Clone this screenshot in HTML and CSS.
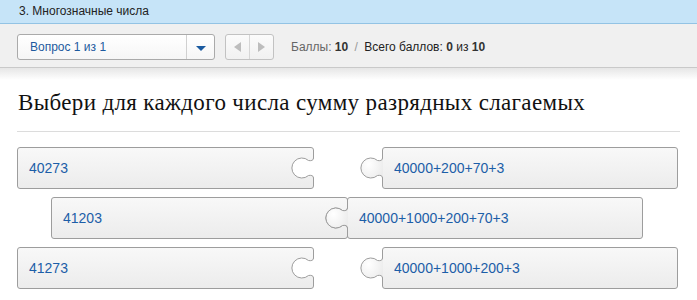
FILE: index.html
```html
<!DOCTYPE html>
<html lang="ru">
<head>
  <meta charset="UTF-8">
  <title>Многозначные числа</title>
  <link rel="stylesheet" href="styles.css">
</head>
<body>
  <div class="topbar">3. Многозначные числа</div>

  <div class="toolbar">
    <div class="select">
      <span class="select-label">Вопрос 1 из 1</span>
      <span class="select-btn"><i class="caret"></i></span>
    </div>
    <div class="nav">
      <span class="nav-btn"><i class="tri tri-left"></i></span>
      <span class="nav-btn"><i class="tri tri-right"></i></span>
    </div>
    <div class="score">
      <span class="muted">Баллы:</span> <b>10</b>
      <span class="slash">/</span>
      Всего баллов: <b>0</b> из <b>10</b>
    </div>
  </div>
  <div class="toolbar-shadow"></div>

  <div class="content">
    <h1 class="task-title">Выбери для каждого числа сумму разрядных слагаемых</h1>
    <div class="divider"></div>

    <div class="puzzle">
      <div class="pair">
        <div class="piece piece-left">
          40273
          <svg class="notch" width="24" height="26" viewBox="0 0 24 26">
            <path class="notch-fill" d="M23.5,0 V3 C23.5,5.5 21,6 18.5,5.5 A10,10 0 1 0 18.5,20.5 C21,20 23.5,20.5 23.5,23 V26 H24 V0 Z"/>
            <path class="edge" d="M23.5,0 V3 C23.5,5.5 21,6 18.5,5.5 A10,10 0 1 0 18.5,20.5 C21,20 23.5,20.5 23.5,23 V26"/>
          </svg>
        </div>
        <div class="piece piece-right">
          <svg class="knob" width="24" height="26" viewBox="0 0 24 26">
            <defs>
              <radialGradient id="shine1" cx="0.35" cy="0.35" r="0.7">
                <stop offset="0" stop-color="#ffffff"/>
                <stop offset="1" stop-color="#ececec"/>
              </radialGradient>
            </defs>
            <path fill="url(#shine1)" d="M23.5,0 V3 C23.5,5.5 21,6 18.5,5.5 A10,10 0 1 0 18.5,20.5 C21,20 23.5,20.5 23.5,23 V26 H24 V0 Z"/>
            <path class="edge" d="M23.5,0 V3 C23.5,5.5 21,6 18.5,5.5 A10,10 0 1 0 18.5,20.5 C21,20 23.5,20.5 23.5,23 V26"/>
          </svg>
          40000+200+70+3
        </div>
      </div>

      <div class="pair pair-joined">
        <div class="piece piece-left">
          41203
          <svg class="notch" width="24" height="26" viewBox="0 0 24 26">
            <path class="notch-fill" d="M23.5,0 V3 C23.5,5.5 21,6 18.5,5.5 A10,10 0 1 0 18.5,20.5 C21,20 23.5,20.5 23.5,23 V26 H24 V0 Z"/>
            <path class="edge" d="M23.5,0 V3 C23.5,5.5 21,6 18.5,5.5 A10,10 0 1 0 18.5,20.5 C21,20 23.5,20.5 23.5,23 V26"/>
          </svg>
        </div>
        <div class="piece piece-right">
          <svg class="knob" width="24" height="26" viewBox="0 0 24 26">
            <defs>
              <radialGradient id="shine2" cx="0.35" cy="0.35" r="0.7">
                <stop offset="0" stop-color="#ffffff"/>
                <stop offset="1" stop-color="#ececec"/>
              </radialGradient>
            </defs>
            <path fill="url(#shine2)" d="M23.5,0 V3 C23.5,5.5 21,6 18.5,5.5 A10,10 0 1 0 18.5,20.5 C21,20 23.5,20.5 23.5,23 V26 H24 V0 Z"/>
            <path class="edge" d="M23.5,0 V3 C23.5,5.5 21,6 18.5,5.5 A10,10 0 1 0 18.5,20.5 C21,20 23.5,20.5 23.5,23 V26"/>
          </svg>
          40000+1000+200+70+3
        </div>
      </div>

      <div class="pair">
        <div class="piece piece-left">
          41273
          <svg class="notch" width="24" height="26" viewBox="0 0 24 26">
            <path class="notch-fill" d="M23.5,0 V3 C23.5,5.5 21,6 18.5,5.5 A10,10 0 1 0 18.5,20.5 C21,20 23.5,20.5 23.5,23 V26 H24 V0 Z"/>
            <path class="edge" d="M23.5,0 V3 C23.5,5.5 21,6 18.5,5.5 A10,10 0 1 0 18.5,20.5 C21,20 23.5,20.5 23.5,23 V26"/>
          </svg>
        </div>
        <div class="piece piece-right">
          <svg class="knob" width="24" height="26" viewBox="0 0 24 26">
            <defs>
              <radialGradient id="shine3" cx="0.35" cy="0.35" r="0.7">
                <stop offset="0" stop-color="#ffffff"/>
                <stop offset="1" stop-color="#ececec"/>
              </radialGradient>
            </defs>
            <path fill="url(#shine3)" d="M23.5,0 V3 C23.5,5.5 21,6 18.5,5.5 A10,10 0 1 0 18.5,20.5 C21,20 23.5,20.5 23.5,23 V26 H24 V0 Z"/>
            <path class="edge" d="M23.5,0 V3 C23.5,5.5 21,6 18.5,5.5 A10,10 0 1 0 18.5,20.5 C21,20 23.5,20.5 23.5,23 V26"/>
          </svg>
          40000+1000+200+3
        </div>
      </div>
    </div>
  </div>
</body>
</html>
```

FILE: styles.css
```css
body {
  margin: 0;
  font-family: 'Liberation Sans', Arial, sans-serif;
  background-color: #fff;
  color: #222;
}
.topbar {
  height: 23px;
  line-height: 23px;
  padding-left: 19px;
  font-size: 12px;
  background-color: #c6e4f8;
  border-bottom: 1px solid #93c3e4;
}
.toolbar {
  display: flex;
  align-items: center;
  padding: 10px 17px 7px;
  background-color: #f0f0f0;
  border-bottom: 1px solid #c9c9c9;
}
.toolbar-shadow {
  height: 12px;
  background: linear-gradient(#e6e6e6, #ffffff);
}
.select {
  display: flex;
  width: 196px;
  height: 24px;
  border: 1px solid #aaa;
  border-radius: 3px;
  background: linear-gradient(#ffffff, #f6f6f6);
}
.select-label {
  flex: 1;
  padding-left: 12px;
  line-height: 24px;
  font-size: 12px;
  color: #1d5a9e;
  border-right: 1px solid #d0d0d0;
}
.select-btn {
  width: 27px;
  display: flex;
  align-items: center;
  justify-content: center;
}
.caret {
  margin-top: 2px;
  border-left: 5px solid transparent;
  border-right: 5px solid transparent;
  border-top: 5px solid #1a5aa0;
}
.nav {
  display: flex;
  margin-left: 10px;
  height: 24px;
  border: 1px solid #c2c2c2;
  border-radius: 3px;
  background: linear-gradient(#fbfbfb, #f1f1f1);
}
.nav-btn {
  width: 23px;
  display: flex;
  align-items: center;
  justify-content: center;
}
.nav-btn + .nav-btn {
  border-left: 1px solid #d6d6d6;
}
.tri {
  border-top: 5px solid transparent;
  border-bottom: 5px solid transparent;
}
.tri-left {
  border-right: 7px solid #bdbdbd;
}
.tri-right {
  border-left: 7px solid #bdbdbd;
}
.score {
  margin-left: 17px;
  font-size: 12px;
  color: #222;
}
.score .muted {
  color: #666;
}
.score b {
  color: #333;
}
.slash {
  color: #999;
  margin: 0 3px;
}
.content {
  padding: 0 17px;
}
.task-title {
  margin: 8px 0 0 1px;
  font-family: 'Liberation Serif', 'Times New Roman', serif;
  font-weight: normal;
  font-size: 23px;
  letter-spacing: 0.35px;
  line-height: 30px;
  color: #111;
}
.divider {
  margin-top: 13px;
  border-top: 1px solid #dcdcdc;
}
.puzzle {
  display: flex;
  flex-direction: column;
  gap: 8px;
  margin-top: 15px;
}
.pair {
  display: flex;
}
.pair-joined {
  margin-left: 34px;
}
.piece {
  position: relative;
  height: 40px;
  line-height: 40px;
  padding-left: 11px;
  box-sizing: content-box;
  font-size: 14px;
  color: #1c5ea8;
  border: 1px solid #9d9d9d;
  border-radius: 3px;
  background: linear-gradient(#f8f8f8, #ececec);
}
.piece-left {
  width: 284px;
}
.piece-right {
  width: 283px;
  margin-left: 68px;
}
.pair-joined .piece-right {
  margin-left: -1px;
}
.notch,
.knob {
  position: absolute;
  top: 7px;
}
.notch {
  right: -1px;
}
.knob {
  left: -24px;
}
.notch-fill {
  fill: #fff;
}
.edge {
  fill: none;
  stroke: #9d9d9d;
  stroke-width: 1;
}
```
